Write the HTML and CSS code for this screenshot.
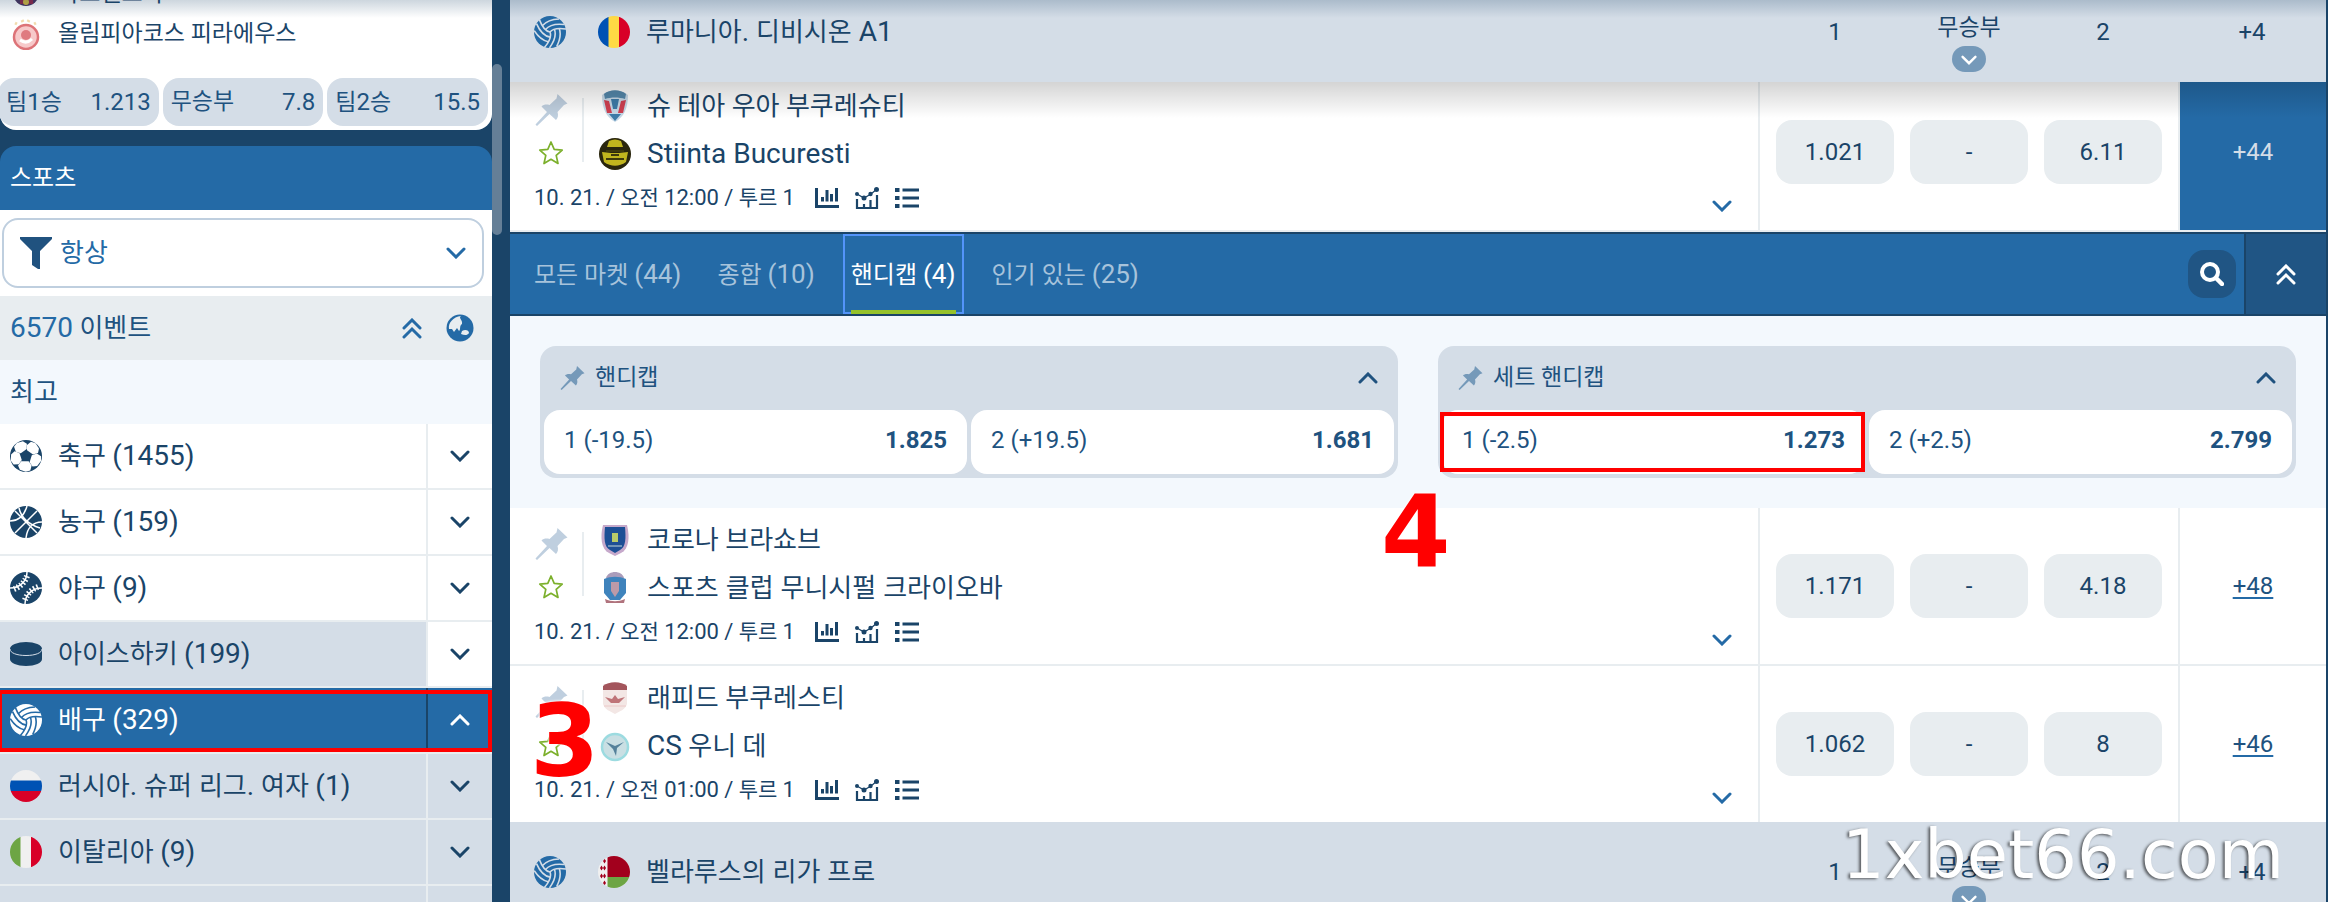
FILE: index.html
```html
<!DOCTYPE html>
<html lang="ko">
<head>
    <meta charset="UTF-8">
    <meta name="viewport" content="width=device-width, initial-scale=1.0">
    <title>배구 배팅</title>
    <link rel="stylesheet" href="styles.css">
</head>
<body>
    <!-- Icon set -->
    <svg class="sprite" aria-hidden="true">
        <symbol id="down" viewBox="0 0 20 12"><path d="M2 2l8 8 8-8" fill="none" stroke="currentColor" stroke-width="3" stroke-linecap="round"/></symbol>
        <symbol id="up" viewBox="0 0 20 12"><path d="M2 10l8-8 8 8" fill="none" stroke="currentColor" stroke-width="3" stroke-linecap="round"/></symbol>
        <symbol id="double-up" viewBox="0 0 20 21"><path d="M2 10l8-8 8 8M2 19l8-8 8 8" fill="none" stroke="currentColor" stroke-width="3" stroke-linecap="round"/></symbol>
        <symbol id="volleyball" viewBox="0 0 32 32">
            <circle cx="16" cy="16" r="16" fill="currentColor"/>
            <g fill="none" stroke="var(--line)" stroke-width="1.6">
                <path id="swirl" d="M16 16Q20 11 32 13M11.500 13.500Q17 7 30 8.500M8.500 9.500Q14 3.500 25 3"/>
                <use href="#swirl" transform="rotate(120 16 16)"/>
                <use href="#swirl" transform="rotate(240 16 16)"/>
            </g>
        </symbol>
        <symbol id="soccer" viewBox="0 0 32 32">
            <circle cx="16" cy="16" r="16" fill="currentColor"/>
            <g fill="#fff">
                <path id="panel" d="M17 5L21 1.800 25.500 3.300 29 8.500 28 13 23 14.500 17 10.200z"/>
                <use href="#panel" transform="rotate(72 16 16)"/>
                <use href="#panel" transform="rotate(144 16 16)"/>
                <use href="#panel" transform="rotate(216 16 16)"/>
                <use href="#panel" transform="rotate(288 16 16)"/>
            </g>
        </symbol>
        <symbol id="basketball" viewBox="0 0 32 32">
            <circle cx="16" cy="16" r="16" fill="currentColor"/>
            <path d="M27 5L5 27M5 5l22 22M17 0C15 7 10 15 0 15M32 16C22 16 17 23 16 32M9 2c2 9 9 16 21 20" fill="none" stroke="#fff" stroke-width="1.500"/>
        </symbol>
        <symbol id="baseball" viewBox="0 0 32 32">
            <circle cx="16" cy="16" r="16" fill="currentColor"/>
            <g fill="none" stroke="#fff">
                <path d="M17 0C17 9 10 16 0 16M32 16C22 16 15 23 15 32" stroke-width="1.500"/>
                <path d="M17 4C15 10 10 15 4 17M28 15C22 17 17 22 15 28" stroke-width="6" stroke-dasharray="1.500 2"/>
            </g>
        </symbol>
        <symbol id="puck" viewBox="0 0 32 24">
            <path d="M0 7v10c0 4 7 7 16 7s16-3 16-7V7z" fill="currentColor"/>
            <ellipse cx="16" cy="7" rx="16" ry="7" fill="currentColor"/>
            <path d="M0 7c0 4 7 6.500 16 6.500S32 11 32 7" fill="none" stroke="#d4dde7" stroke-width="1"/>
        </symbol>
        <symbol id="russia" viewBox="0 0 32 32"><g clip-path="url(#disc)"><path d="M0 0h32v11H0z" fill="#f0f0f0"/><path d="M0 10.500h32V21H0z" fill="#0052b4"/><path d="M0 21h32v11H0z" fill="#d80027"/></g></symbol>
        <symbol id="italy" viewBox="0 0 32 32"><g clip-path="url(#disc)"><path d="M0 0h11v32H0z" fill="#6da544"/><path d="M10.500 0H21v32H10.500z" fill="#f0f0f0"/><path d="M21 0h11v32H21z" fill="#d80027"/></g></symbol>
        <symbol id="romania" viewBox="0 0 32 32"><g clip-path="url(#disc)"><path d="M0 0h11v32H0z" fill="#0052b4"/><path d="M10.500 0H21v32H10.500z" fill="#ffda44"/><path d="M21 0h11v32H21z" fill="#d80027"/></g></symbol>
        <symbol id="belarus" viewBox="0 0 32 32"><g clip-path="url(#disc)"><path d="M0 0h32v32H0z" fill="#f0f0f0"/><path d="M9.500 0H32v21H9.500z" fill="#a2001d"/><path d="M9.500 21H32v11H9.500z" fill="#6da544"/><path d="M2 12l1.500-2.500L5 12l-1.500 2.500zM5 12l1.500-2.500L8 12l-1.500 2.500zM2 20l1.500-2.500L5 20l-1.500 2.500zM5 20l1.500-2.500L8 20l-1.500 2.500zM5 5l1.500-2.500L8 5 6.500 7.500zM5 27l1.500-2.500L8 27l-1.500 2.500z" fill="#a2001d"/></g></symbol>
        <clipPath id="disc"><circle cx="16" cy="16" r="16"/></clipPath>
        <symbol id="pin" viewBox="0 0 32 32"><path d="M22 0l10 9.500-3.500 1.500-6.500 7c1 3 .5 6-1.500 8L14 20 1.500 32 0 30.500 11.500 18 6 12.500c2-2 5-2.500 8-1.500l7-6.500z" fill="currentColor"/></symbol>
        <symbol id="star" viewBox="0 0 26 26"><path d="M13 2l3.200 7.300 8 .8-6 5.300 1.800 8.100-7-4.200-7 4.200 1.800-8.100-6-5.300 8-.8z" fill="none" stroke="#7cb02c" stroke-width="1.700" stroke-linejoin="round"/></symbol>
        <symbol id="bars" viewBox="0 0 24 20"><path d="M1.500 0v18.500H24" fill="none" stroke="currentColor" stroke-width="3"/><path d="M7.500 9v4.500M12 2v11.500M16.500 6v7.500M21.500 0v13.500" stroke="currentColor" stroke-width="3"/></symbol>
        <symbol id="trend" viewBox="0 0 24 22"><path d="M2 12v9h20V8M9 21v-4M15.500 21v-8" fill="none" stroke="currentColor" stroke-width="2.200"/><path d="M2 7l7 4 7-4 6-5" fill="none" stroke="currentColor" stroke-width="1.300"/><circle cx="2" cy="7" r="2" fill="currentColor"/><circle cx="9" cy="11" r="2.500" fill="currentColor"/><circle cx="15.500" cy="7" r="2.200" fill="currentColor"/><circle cx="21.500" cy="2.500" r="2.500" fill="currentColor"/></symbol>
        <symbol id="list" viewBox="0 0 24 20"><path d="M7.500 2H24M7.500 10H24M7.500 18H24" stroke="currentColor" stroke-width="3"/><path d="M0 2h4.500M0 10h4.500M0 18h4.500" stroke="currentColor" stroke-width="4"/></symbol>
    </svg>

    <aside class="sidebar">
        <section class="live-card">
            <div class="live-team">
                <svg width="28" height="28" viewBox="0 0 28 28"><circle cx="14" cy="13" r="13" fill="#47305b"/><path d="M8 4h4v20H8zM17 4h4v20h-4z" fill="#8f2445"/><circle cx="14" cy="22" r="3" fill="#d3b53d"/></svg>
                바르셀로나
            </div>
            <div class="live-team">
                <svg width="28" height="32" viewBox="0 0 28 32"><path d="M3 5l2 1M10 2l1 2M17 2l-1 2M24 5l-2 1" stroke="#f2dcae" stroke-width="3"/><circle cx="14" cy="19" r="12" fill="#f7c9ca" stroke="#dd7378" stroke-width="2.500"/><circle cx="14" cy="17" r="5" fill="#df7b80"/><path d="M8 22c4 3 8 3 12-1" fill="none" stroke="#fff" stroke-width="3"/></svg>
                올림피아코스 피라에우스
            </div>
            <div class="live-odds">
                <button type="button"><span>팀<b>1</b>승</span><b>1.213</b></button>
                <button type="button"><span>무승부</span><b>7.8</b></button>
                <button type="button"><span>팀<b>2</b>승</span><b>15.5</b></button>
            </div>
        </section>

        <section class="sports">
            <h2>스포츠</h2>
            <div class="filter">
                <svg class="funnel" width="32" height="32" viewBox="0 0 32 32"><path d="M0 0h32v2L20 14v18h-2l-6-4V14L0 2z" fill="#20527f"/></svg>
                <select aria-label="기간"><option>항상</option></select>
                <svg class="chevron" width="20" height="12"><use href="#down"/></svg>
            </div>
            <div class="events">
                <p><span>6570</span> 이벤트</p>
                <button type="button" aria-label="접기"><svg width="20" height="21"><use href="#double-up"/></svg></button>
                <button type="button" aria-label="지역"><svg width="28" height="28" viewBox="0 0 28 28"><circle cx="14" cy="14" r="13.500" fill="#246aa6"/><path d="M3 15C2 9 7 3 15 2c-3 2 2 4 1 8-3 2-1 6-3 7l-2-3-3 4-2-3zM16 17c3-2 7-1 7 2-2 3-5 2-8 1z" fill="#e8edf0"/></svg></button>
            </div>
            <h3>최고</h3>
            <ul class="sport-list">
                <li>
                    <a href="#soccer"><svg width="32" height="32"><use href="#soccer"/></svg><span>축구 <b>(1455)</b></span></a>
                    <button type="button" aria-label="펼치기"><svg width="20" height="12"><use href="#down"/></svg></button>
                </li>
                <li>
                    <a href="#basketball"><svg width="32" height="32"><use href="#basketball"/></svg><span>농구 <b>(159)</b></span></a>
                    <button type="button" aria-label="펼치기"><svg width="20" height="12"><use href="#down"/></svg></button>
                </li>
                <li>
                    <a href="#baseball"><svg width="32" height="32"><use href="#baseball"/></svg><span>야구 <b>(9)</b></span></a>
                    <button type="button" aria-label="펼치기"><svg width="20" height="12"><use href="#down"/></svg></button>
                </li>
                <li class="hover">
                    <a href="#hockey"><svg width="32" height="24"><use href="#puck"/></svg><span>아이스하키 <b>(199)</b></span></a>
                    <button type="button" aria-label="펼치기"><svg width="20" height="12"><use href="#down"/></svg></button>
                </li>
                <li class="active">
                    <a href="#volleyball"><svg width="32" height="32"><use href="#volleyball"/></svg><span>배구 <b>(329)</b></span></a>
                    <button type="button" aria-label="접기"><svg width="20" height="12"><use href="#up"/></svg></button>
                    <span class="mark"></span>
                </li>
                <li class="country">
                    <a href="#russia"><svg width="32" height="32"><use href="#russia"/></svg><span>러시아<b>. </b>슈퍼<b> </b>리그<b>. </b>여자 <b>(1)</b></span></a>
                    <button type="button" aria-label="펼치기"><svg width="20" height="12"><use href="#down"/></svg></button>
                </li>
                <li class="country">
                    <a href="#italy"><svg width="32" height="32"><use href="#italy"/></svg><span>이탈리아 <b>(9)</b></span></a>
                    <button type="button" aria-label="펼치기"><svg width="20" height="12"><use href="#down"/></svg></button>
                </li>
                <li class="country">
                    <a href="#more" aria-label="더 보기"></a>
                    <button type="button" aria-label="펼치기"></button>
                </li>
            </ul>
        </section>
    </aside>

    <div class="gutter"><div class="thumb"></div></div>

    <main>
        <header class="league sticky">
            <div class="league-name">
                <svg width="32" height="32"><use href="#volleyball"/></svg>
                <svg width="32" height="32"><use href="#romania"/></svg>
                <h1>루마니아<b>. </b>디비시온<b> A1</b></h1>
            </div>
            <div class="columns">
                <span>1</span>
                <span class="draw">무승부<button type="button" aria-label="마켓 선택"><svg width="16" height="12"><use href="#down"/></svg></button></span>
                <span>2</span>
            </div>
            <span class="total">+4</span>
        </header>

        <article class="match open">
            <div class="info">
                <div class="marks">
                    <button type="button" aria-label="고정"><svg width="33" height="32"><use href="#pin"/></svg></button>
                    <button type="button" aria-label="즐겨찾기"><svg width="26" height="26"><use href="#star"/></svg></button>
                </div>
                <div class="teams">
                    <div><svg width="32" height="32" viewBox="0 0 32 32"><path d="M3 5C9-1 23-1 29 5c0 13-4 22-13 27C7 27 3 18 3 5z" fill="#c6d8e6"/><path d="M5 4c6-5 16-5 22 0l-1 5c-6-2-14-2-20 0z" fill="#5488ab"/><path d="M5 10l5 1 3 12-5 0zM27 10l-5 1-3 12 5 0z" fill="#cf3f50"/><path d="M12 9h8l-2 10h-4zM10 24h12l-6 7z" fill="#3c7ba8"/></svg>슈 테아 우아 부쿠레슈티</div>
                    <div><svg width="32" height="32" viewBox="0 0 32 32"><circle cx="16" cy="16" r="16" fill="#2a260d"/><path d="M10 3c4-2 8-2 12 0l2 6H8zM3 14l9 1h8l9-1-2 10c-7 5-15 5-22 0z" fill="#c1b51e"/><path d="M7 13h18M7 21h18M12 17h8" stroke="#3e390d" stroke-width="2"/></svg><b>Stiinta Bucuresti</b></div>
                </div>
                <div class="when">
                    <time><b>10. 21. /</b> 오전 <b>12:00 /</b> 투르 <b>1</b></time>
                    <svg width="24" height="20"><use href="#bars"/></svg>
                    <svg width="24" height="22"><use href="#trend"/></svg>
                    <svg width="24" height="20"><use href="#list"/></svg>
                </div>
                <button class="expand" type="button" aria-label="펼치기"><svg width="20" height="12"><use href="#down"/></svg></button>
            </div>
            <div class="odds"><button type="button">1.021</button><button type="button">-</button><button type="button">6.11</button></div>
            <a class="more" href="#m1">+44</a>
        </article>

        <nav class="tabs">
            <button type="button">모든 마켓 <b>(44)</b></button>
            <button type="button">종합 <b>(10)</b></button>
            <button type="button" class="current">핸디캡 <b>(4)</b></button>
            <button type="button">인기 있는 <b>(25)</b></button>
            <button type="button" class="search" aria-label="검색"><svg width="24" height="24" viewBox="0 0 24 24"><circle cx="10" cy="10" r="8" fill="none" stroke="#fff" stroke-width="4"/><path d="M16 16l6 6" stroke="#fff" stroke-width="4.500" stroke-linecap="round"/></svg></button>
            <button type="button" class="collapse" aria-label="모두 접기"><svg width="20" height="21"><use href="#double-up"/></svg></button>
        </nav>

        <section class="markets">
            <div class="market">
                <h2><svg width="25" height="24"><use href="#pin"/></svg>핸디캡<svg class="toggle" width="20" height="12"><use href="#up"/></svg></h2>
                <div class="lines">
                    <button type="button"><span>1 (-19.5)</span><strong>1.825</strong></button>
                    <button type="button"><span>2 (+19.5)</span><strong>1.681</strong></button>
                </div>
            </div>
            <div class="market">
                <h2><svg width="25" height="24"><use href="#pin"/></svg>세트 핸디캡<svg class="toggle" width="20" height="12"><use href="#up"/></svg></h2>
                <div class="lines">
                    <button type="button"><span>1 (-2.5)</span><strong>1.273</strong><span class="mark"></span></button>
                    <button type="button"><span>2 (+2.5)</span><strong>2.799</strong></button>
                </div>
            </div>
            <span class="step step-four">4</span>
        </section>

        <article class="match">
            <div class="info">
                <div class="marks">
                    <button type="button" aria-label="고정"><svg width="33" height="32"><use href="#pin"/></svg></button>
                    <button type="button" aria-label="즐겨찾기"><svg width="26" height="26"><use href="#star"/></svg></button>
                </div>
                <div class="teams">
                    <div><svg width="32" height="32" viewBox="0 0 32 32"><path d="M4 1h24c3 12 2 24-6 28l-6 3-6-3C2 25 1 13 4 1z" fill="#c6a9cb"/><path d="M6 3h20c1 11 1 20-5 23l-5 3-5-3C5 23 5 14 6 3z" fill="#1d4f95"/><path d="M13 9h6v9h-6z" fill="#b9cb69"/><path d="M9 22h14" stroke="#6f93b8" stroke-width="2"/></svg>코로나 브라쇼브</div>
                    <div><svg width="32" height="32" viewBox="0 0 32 32"><path d="M7 6c2-8 16-8 18 0z" fill="#ab9dbb"/><path d="M5 7c7-3 15-3 22 0v14l-6 7H11l-6-7z" fill="#3f83bc"/><path d="M12 10h8v9l-4 6-4-6z" fill="#bd9aa8"/><path d="M6 27c7 3 13 3 20 0l-1 4H7z" fill="#b0737d"/></svg>스포츠<b> </b>클럽<b> </b>무니시펄<b> </b>크라이오바</div>
                </div>
                <div class="when">
                    <time><b>10. 21. /</b> 오전 <b>12:00 /</b> 투르 <b>1</b></time>
                    <svg width="24" height="20"><use href="#bars"/></svg>
                    <svg width="24" height="22"><use href="#trend"/></svg>
                    <svg width="24" height="20"><use href="#list"/></svg>
                </div>
                <button class="expand" type="button" aria-label="펼치기"><svg width="20" height="12"><use href="#down"/></svg></button>
            </div>
            <div class="odds"><button type="button">1.171</button><button type="button">-</button><button type="button">4.18</button></div>
            <a class="more" href="#m2">+48</a>
        </article>

        <article class="match last">
            <div class="info">
                <div class="marks">
                    <button type="button" aria-label="고정"><svg width="33" height="32"><use href="#pin"/></svg></button>
                    <button type="button" aria-label="즐겨찾기"><svg width="26" height="26"><use href="#star"/></svg></button>
                </div>
                <div class="teams">
                    <div><svg width="32" height="32" viewBox="0 0 32 32"><path d="M4 4C10-1 22-1 28 4v18c-2 6-7 7-12 10-5-3-10-4-12-10z" fill="#f3e7e5"/><path d="M4 4C10-1 22-1 28 4v4H4z" fill="#a3555c"/><path d="M6 15l7 2 3-4 3 4 7-2-6 6h-8z" fill="#bf7478"/><path d="M5 24h22" stroke="#ecc9c8" stroke-width="1"/></svg>래피드 부쿠레스티</div>
                    <div><svg width="32" height="32" viewBox="0 0 32 32"><circle cx="16" cy="17" r="13" fill="#c9dfe3" stroke="#9cdbe0" stroke-width="2.500"/><path d="M7 12l9 4 9-4-7 6-1 8-3-7z" fill="#54819a"/></svg><b>CS</b> 우니 데</div>
                </div>
                <div class="when">
                    <time><b>10. 21. /</b> 오전 <b>01:00 /</b> 투르 <b>1</b></time>
                    <svg width="24" height="20"><use href="#bars"/></svg>
                    <svg width="24" height="22"><use href="#trend"/></svg>
                    <svg width="24" height="20"><use href="#list"/></svg>
                </div>
                <button class="expand" type="button" aria-label="펼치기"><svg width="20" height="12"><use href="#down"/></svg></button>
                <span class="step step-three">3</span>
            </div>
            <div class="odds"><button type="button">1.062</button><button type="button">-</button><button type="button">8</button></div>
            <a class="more" href="#m3">+46</a>
        </article>

        <header class="league">
            <div class="league-name">
                <svg width="32" height="32"><use href="#volleyball"/></svg>
                <svg width="32" height="32"><use href="#belarus"/></svg>
                <h1>벨라루스의<b> </b>리가<b> </b>프로</h1>
            </div>
            <div class="columns">
                <span>1</span>
                <span class="draw">무승부<button type="button" aria-label="마켓 선택"><svg width="16" height="12"><use href="#down"/></svg></button></span>
                <span>2</span>
            </div>
            <span class="total">+4</span>
        </header>
    </main>

    <div class="top-shade"></div>
    <div class="watermark">1xbet66.com</div>
</body>
</html>
```
FILE: styles.css
```css
* {
    box-sizing: border-box;
}
body {
    margin: 0;
    height: 100vh;
    overflow: hidden;
    display: flex;
    position: relative;
    background: #1a4468;
    color: #1a4468;
    font-family: Roboto, "Noto Sans CJK KR", sans-serif;
    font-size: 26px;
    line-height: 32px;
}
h1, h2, h3, p, ul {
    margin: 0;
    padding: 0;
    font-size: inherit;
    font-weight: normal;
}
b {
    font-weight: normal;
    font-size: 28px;
}
button, select {
    font: inherit;
    color: inherit;
    background: none;
    border: none;
    padding: 0;
    margin: 0;
    cursor: pointer;
}
a {
    color: inherit;
}
svg {
    flex: none;
    display: block;
}
.sprite {
    position: absolute;
    width: 0;
    height: 0;
}

/* Sidebar */
.sidebar {
    flex: none;
    width: 492px;
}
.live-card {
    margin: -26px 0 16px;
    padding-bottom: 4px;
    background: #fff;
    border-radius: 0 0 16px 16px;
    font-size: 23px;
}
.live-team {
    display: flex;
    align-items: center;
    gap: 18px;
    height: 40px;
    padding-left: 12px;
}
.live-odds {
    display: flex;
    gap: 4px;
    margin: 24px 4px 0 -2px;
}
.live-odds button {
    flex: 1;
    height: 48px;
    padding: 0 8px;
    display: flex;
    align-items: center;
    justify-content: space-between;
    background: #d4dde7;
    border-radius: 16px;
    color: #20527f;
}
.live-odds b {
    font-size: 24px;
}
.sports h2 {
    height: 64px;
    padding: 16px 10px;
    background: #246aa6;
    border-radius: 16px 16px 0 0;
    color: #fff;
    font-size: 24px;
}
.filter {
    position: relative;
    padding: 8px 8px 8px 2px;
    background: #fff;
}
.filter select {
    display: block;
    width: 100%;
    height: 70px;
    padding-left: 56px;
    appearance: none;
    border: 2px solid #bfcfdf;
    border-radius: 16px;
    color: #246aa6;
}
/* icons laid over the select */
.funnel, .chevron {
    position: absolute;
    top: 27px;
    left: 20px;
    pointer-events: none;
}
.chevron {
    top: 37px;
    left: auto;
    right: 26px;
    color: #246aa6;
}
.events {
    display: flex;
    align-items: center;
    gap: 24px;
    height: 64px;
    padding: 0 18px 0 10px;
    background: #e8edf0;
    color: #246aa6;
}
.events p {
    flex: 1;
    color: #20527f;
}
.events p span {
    font-size: 28px;
    color: #246aa6;
}
.sports h3 {
    height: 64px;
    padding: 16px 10px;
    background: #f3f8fd;
    color: #20527f;
}
.sport-list {
    list-style: none;
    background: #e8edf0;
}
.sport-list li {
    position: relative;
    display: flex;
    gap: 2px;
    height: 66px;
    padding-bottom: 2px;
}
.sport-list a {
    flex: 1;
    display: flex;
    align-items: center;
    gap: 16px;
    padding-left: 10px;
    background: #fff;
    text-decoration: none;
}
.sport-list button {
    width: 64px;
    display: flex;
    align-items: center;
    justify-content: center;
    background: #fff;
}
.hover a, .country a, .sport-list .country button {
    background: #d4dde7;
}
.active {
    --line: #246aa6;
    color: #fff;
}
.active a, .sport-list .active button {
    background: #246aa6;
}
.sport-list .active button {
    margin-left: -2px;
    width: 66px;
    border-left: 2px solid #1a4468;
}
.mark {
    position: absolute;
    inset: 2px 0 2px -2px;
    border: 4px solid #f00;
}
.gutter {
    flex: none;
    width: 18px;
    padding-top: 64px;
}
.thumb {
    width: 10px;
    height: 171px;
    border-radius: 5px;
    background: #657f97;
}

/* Main column */
main {
    flex: 1;
    min-width: 0;
    margin-right: 2px;
}
.league, .match {
    display: grid;
    grid-template-columns: 1fr 420px 148px;
}
.league {
    --line: #d4dde7;
    height: 100px;
    padding-top: 34px;
    align-items: start;
    background: #d4dde7;
}
.league.sticky {
    position: relative;
    z-index: 1;
    margin: -18px 0 -8px;
}
.league.sticky::after {
    content: "";
    position: absolute;
    top: 100%;
    left: 0;
    right: 0;
    height: 36px;
    background: linear-gradient(rgba(0, 0, 0, 0.17), rgba(0, 0, 0, 0));
    pointer-events: none;
}
.league-name {
    display: flex;
    align-items: center;
    padding-left: 24px;
}
.league-name > svg:first-child {
    color: #246aa6;
    margin-right: 32px;
}
.league-name h1 {
    margin-left: 16px;
}
.columns {
    display: grid;
    grid-template-columns: repeat(3, 1fr);
    gap: 16px;
    padding: 0 16px 0 18px;
    text-align: center;
    font-size: 24px;
}
.draw {
    display: flex;
    flex-direction: column;
    align-items: center;
    gap: 2px;
    margin-top: -4px;
    font-size: 23px;
}
.draw button {
    width: 34px;
    height: 26px;
    padding: 8px 9px;
    border-radius: 13px;
    background: #7599b9;
    color: #fff;
}
.total {
    text-align: center;
    font-size: 24px;
}
.match {
    height: 158px;
    background: #fff;
    border-bottom: 2px solid #e8edf0;
}
.match.last {
    height: 156px;
    border-bottom: none;
}
.info {
    position: relative;
    display: grid;
    grid-template-columns: 48px 1fr;
    grid-template-rows: 88px 40px;
    align-content: start;
    row-gap: 12px;
    padding: 8px 24px 0;
}
.marks {
    display: flex;
    flex-direction: column;
    align-items: center;
    gap: 14px;
    width: 34px;
    height: 72px;
    margin-top: 12px;
    color: #bfcfdf;
}
.marks::after {
    content: "";
    position: absolute;
    left: 72px;
    top: 24px;
    width: 2px;
    height: 64px;
    background: #e8edf0;
}
.teams {
    padding-left: 17px;
}
.teams div {
    display: flex;
    align-items: center;
    height: 48px;
    white-space: pre;
}
.teams svg {
    margin-right: 16px;
}
.when {
    grid-column: 1 / 3;
    display: flex;
    align-items: center;
    gap: 16px;
    height: 32px;
    font-size: 21px;
}
.when b {
    font-size: 22px;
}
.when time {
    margin-right: 4px;
}
.expand {
    position: absolute;
    right: 26px;
    bottom: 18px;
    color: #246aa6;
}
.odds {
    display: grid;
    grid-template-columns: repeat(3, 1fr);
    gap: 16px;
    align-items: center;
    padding: 0 16px;
    border-left: 2px solid #e8edf0;
    font-size: 24px;
}
.odds button {
    height: 64px;
    border-radius: 16px;
    background: #e8edf0;
}
.more {
    display: flex;
    align-items: center;
    justify-content: center;
    border-left: 2px solid #e8edf0;
    color: #20527f;
    font-size: 24px;
    text-decoration: underline #246aa6 2px;
    text-underline-offset: 3px;
}
.open .more {
    background: #246aa6;
    color: #d4dde7;
    text-decoration: none;
}

/* Market tabs */
.tabs {
    display: flex;
    align-items: center;
    gap: 20px;
    height: 84px;
    padding-left: 16px;
    border: solid #1a4468;
    border-width: 2px 0;
    background: #246aa6;
    color: #a7c3db;
    font-size: 24px;
}
.tabs b {
    font-size: 26px;
}
.tabs button {
    height: 80px;
    padding: 0 8px;
}
.tabs .current {
    position: relative;
    color: #fff;
    outline: 2px solid #5394f9;
    outline-offset: -2px;
}
.current::after {
    content: "";
    position: absolute;
    left: 8px;
    right: 8px;
    bottom: 0;
    height: 4px;
    background: #95c22b;
}
.tabs .search {
    margin-left: auto;
    width: 48px;
    height: 48px;
    padding: 12px;
    border-radius: 16px;
    background: #205584;
}
.tabs .collapse {
    width: 82px;
    margin-left: -12px;
    padding: 0 30px;
    border-left: 2px solid #1a4468;
    background: #205584;
    color: #fff;
}

/* Opened markets */
.markets {
    position: relative;
    display: flex;
    gap: 40px;
    padding: 30px;
    background: #f3f8fd;
}
.market {
    flex: 1;
    padding: 0 4px 4px;
    border-radius: 16px;
    background: #d4dde7;
    color: #20527f;
}
.market h2 {
    display: flex;
    align-items: center;
    gap: 10px;
    height: 64px;
    padding: 0 16px;
    font-size: 23px;
}
.market h2 svg:first-child {
    color: #7599b9;
}
.market .toggle {
    margin-left: auto;
}
.lines {
    display: flex;
    gap: 4px;
    font-size: 24px;
}
.lines button {
    position: relative;
    flex: 1;
    display: flex;
    align-items: center;
    justify-content: space-between;
    height: 64px;
    padding: 0 20px 4px;
    border-radius: 16px;
    background: #fff;
}
.lines strong {
    font-weight: bold;
}

/* Overlays */
.step {
    position: absolute;
    z-index: 2;
    color: #f00;
    font: bold 100px/100px "DejaVu Sans", sans-serif;
    text-shadow: 0 0 3px #fff, 0 0 3px #fff;
}
.step-four {
    left: 871px;
    bottom: -74px;
}
.step-three {
    left: 20px;
    top: 26px;
}
.top-shade {
    position: absolute;
    z-index: 3;
    top: 0;
    left: 0;
    right: 0;
    height: 18px;
    background: linear-gradient(rgba(26, 68, 104, 0.22), rgba(26, 68, 104, 0));
    pointer-events: none;
}
.watermark {
    position: absolute;
    z-index: 3;
    right: 44px;
    bottom: 7px;
    color: #fff;
    font: 67px/80px "DejaVu Sans", sans-serif;
    text-shadow: -2px 1px 3px rgba(0, 0, 0, 0.6);
    pointer-events: none;
}
```
